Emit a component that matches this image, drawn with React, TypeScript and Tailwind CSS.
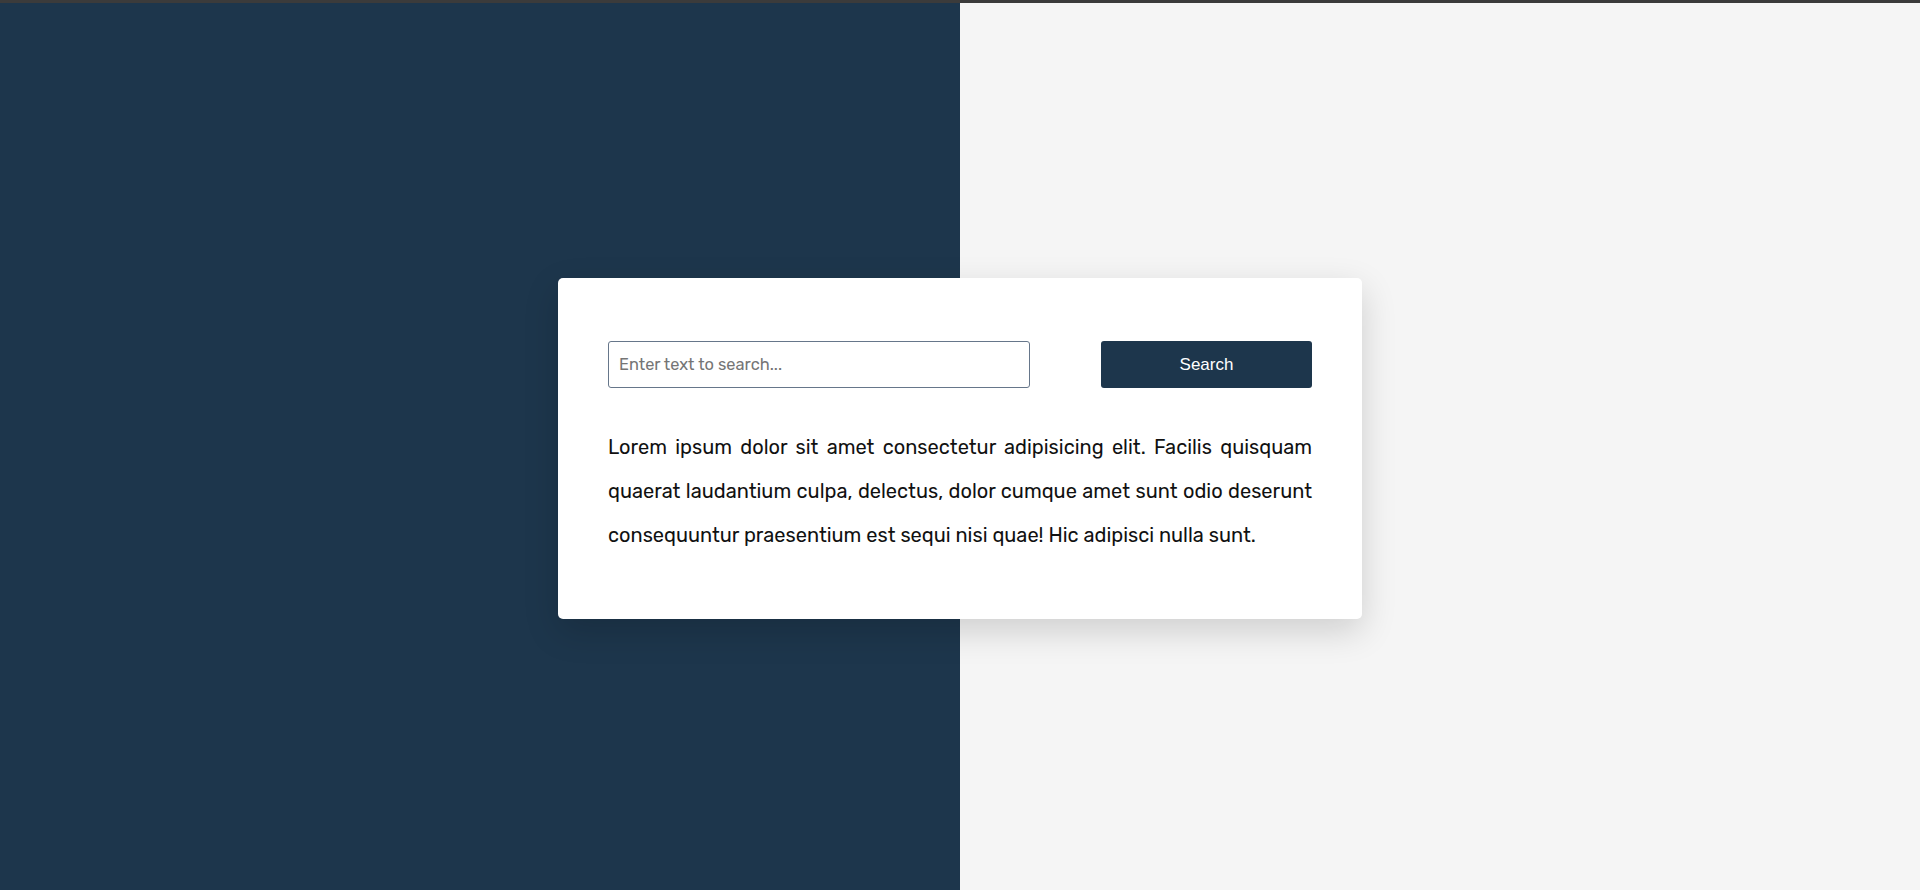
import { useState } from "react";

const App = () => {
    const [query, setQuery] = useState("");

    return (
        <div className="min-h-screen bg-[#f5f5f5] font-['Rubik','Roboto','Open_Sans',sans-serif]">
            <div className="h-[3px] bg-[#3b3b3b]" />
            <div className="h-[887px] flex items-center justify-center pt-[4px] bg-[linear-gradient(to_right,#1d364c_50%,#f5f5f5_50%)]">
                <div className="w-[804px] bg-white rounded-[5px] px-[50px] pt-[63px] pb-[62px] shadow-[0_12px_35px_rgba(0,0,0,0.16)]">
                    <div className="flex items-center justify-between">
                        <input
                            value={query}
                            onChange={(e) => setQuery(e.target.value)}
                            placeholder="Enter text to search..."
                            className="w-[422px] h-[47px] border border-[#66768a] rounded-[3px] px-[10px] text-[16.4px] text-[#222] placeholder:text-[#757575] outline-none"
                        />
                        <button
                            type="button"
                            className="w-[211px] h-[47px] bg-[#1d364c] text-white rounded-[3px] text-[17px] font-['Liberation_Sans',Arial,sans-serif]"
                        >
                            Search
                        </button>
                    </div>
                    <p className="mt-[37px] text-[20px] leading-[44px] text-justify text-[#111]">
                        Lorem ipsum dolor sit amet consectetur adipisicing elit. Facilis quisquam quaerat laudantium culpa, delectus, dolor cumque amet sunt odio deserunt consequuntur praesentium est sequi nisi quae! Hic adipisci nulla sunt.
                    </p>
                </div>
            </div>
        </div>
    );
};

export default App;
